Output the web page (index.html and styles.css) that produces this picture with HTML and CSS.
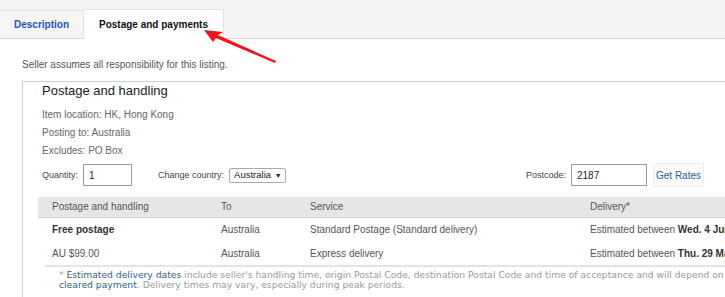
FILE: index.html
```html
<html>
<head>
<link rel="stylesheet" href="styles.css">
</head>
<body>
<div class="tabs">
  <div class="tab">Description</div>
  <div class="tab active">Postage and payments</div>
</div>

<div class="panel">
  <p class="seller">Seller assumes all responsibility for this listing.</p>

  <div class="box">
    <h2>Postage and handling</h2>
    <div class="info">
      <div>Item location: HK, Hong Kong</div>
      <div>Posting to: Australia</div>
      <div>Excludes: PO Box</div>
    </div>

    <div class="controls">
      <label>Quantity:</label>
      <input class="qty" type="text" value="1">
      <label class="country">Change country:</label>
      <span class="select">Australia <span class="caret">&#9660;</span></span>
      <span class="spacer"></span>
      <label>Postcode:</label>
      <input class="postcode" type="text" value="2187">
      <button class="rates">Get Rates</button>
    </div>

    <table class="rates-table">
      <tr class="head">
        <td class="c1">Postage and handling</td>
        <td class="c2">To</td>
        <td class="c3">Service</td>
        <td class="c4">Delivery*</td>
      </tr>
      <tr>
        <td class="c1"><b>Free postage</b></td>
        <td class="c2">Australia</td>
        <td class="c3">Standard Postage (Standard delivery)</td>
        <td class="c4">Estimated between <b>Wed. 4 Jun. and Tue. 17 Jun.</b></td>
      </tr>
      <tr>
        <td class="c1">AU $99.00</td>
        <td class="c2">Australia</td>
        <td class="c3">Express delivery</td>
        <td class="c4">Estimated between <b>Thu. 29 May and Mon. 2 Jun.</b></td>
      </tr>
    </table>

    <div class="footnote">
      * <a href="#">Estimated delivery dates</a> include seller's handling time, origin Postal Code, destination Postal Code and time of acceptance and will depend on postage service selected and receipt of<br>
      <a href="#">cleared payment</a>. Delivery times may vary, especially during peak periods.
    </div>
  </div>
</div>

<svg class="arrow" width="725" height="297" viewBox="0 0 725 297">
  <polygon points="204,30 223,32 218,35 276,61 275,63 216,38 213,42" fill="#f0141a"/>
</svg>
</body>
</html>
```

FILE: styles.css
```css
body{
  margin: 0;
  font-family: "Liberation Sans", Arial, sans-serif;
  font-size: 11px;
  color: #333;
  background: #fff;
  overflow: hidden;
  width: 725px;
  height: 297px;
  position: relative;
}

.tabs{
  display: flex;
  padding-top: 10px;
  background: #f4f4f4;
  border-bottom: 1px solid #dadada;
  height: 28px;
  box-sizing: content-box;
}

.tab{
  padding: 0 14px;
  line-height: 27px;
  font-size: 10px;
  font-weight: bold;
  color: #2255bb;
  background: #f5f5f5;
  border: 1px solid #e2e2e2;
  border-bottom: none;
  border-left: none;
}

.tab.active{
  color: #111;
  background: #fff;
  margin-bottom: -1px;
  margin-top: -1px;
  line-height: 29px;
  padding: 0 15px;
}

.panel{
  padding-left: 22px;
}

.seller{
  margin: 20px 0 11px;
  color: #555;
  font-size: 10px;
}

.box{
  border: 1px solid #cfcfcf;
  border-right: none;
  padding: 1px 0 0 0;
  height: 240px;
}

h2{
  margin: 0 0 0 19px;
  font-size: 13px;
  font-weight: normal;
  color: #222;
  line-height: 15px;
}

.info{
  margin: 8px 0 0 19px;
  color: #666;
  font-size: 10px;
}

.info div{
  line-height: 18px;
}

.controls{
  display: flex;
  align-items: center;
  margin: 3px 0 0 19px;
  font-size: 9px;
  color: #444;
  width: 662px;
}

.controls label{
  margin-right: 5px;
}

.controls input{
  font-family: "Liberation Sans", Arial, sans-serif;
  font-size: 10px;
  height: 22px;
  box-sizing: border-box;
  border: 1px solid #999;
  padding: 0 5px;
  color: #222;
}

.qty{
  width: 49px;
}

.country{
  margin-left: 26px;
}

.select{
  border: 1px solid #aaa;
  border-radius: 2px;
  padding: 0 3px 0 4px;
  line-height: 12px;
  font-size: 9.5px;
  color: #222;
}

.caret{
  font-size: 7px;
  margin-left: 1px;
}

.spacer{
  flex: 1;
}

.postcode{
  width: 76px;
}

.rates{
  margin-left: 6px;
  height: 24px;
  width: 51px;
  padding: 0;
  font-family: "Liberation Sans", Arial, sans-serif;
  font-size: 10px;
  color: #2a5db0;
  background: #fafafa;
  border: 1px solid #ececec;
  border-radius: 2px;
}

.rates-table{
  margin: 10px 0 0 15px;
  border-collapse: collapse;
  table-layout: fixed;
  width: 760px;
  font-size: 10px;
  color: #555;
}

.rates-table td{
  padding: 0 0 0 14px;
  height: 24px;
  white-space: nowrap;
  overflow: hidden;
}

.rates-table .head td{
  background: #e6e6e6;
  height: 20px;
  border-bottom: 1px solid #cfcfcf;
  color: #555;
}

.rates-table b{
  color: #333;
}

.c1{ width: 155px; }
.c2{ width: 75px; }
.c3{ width: 266px; }

.footnote{
  margin-left: 22px;
  border-top: 2px solid #e3e3e3;
  padding: 3px 0 0 14px;
  font-family: "DejaVu Sans", Verdana, sans-serif;
  font-size: 9.2px;
  line-height: 10px;
  color: #999;
  white-space: nowrap;
}

.footnote a{
  color: #2a5db0;
  text-decoration: none;
}

.arrow{
  position: absolute;
  left: 0;
  top: 0;
}
```
